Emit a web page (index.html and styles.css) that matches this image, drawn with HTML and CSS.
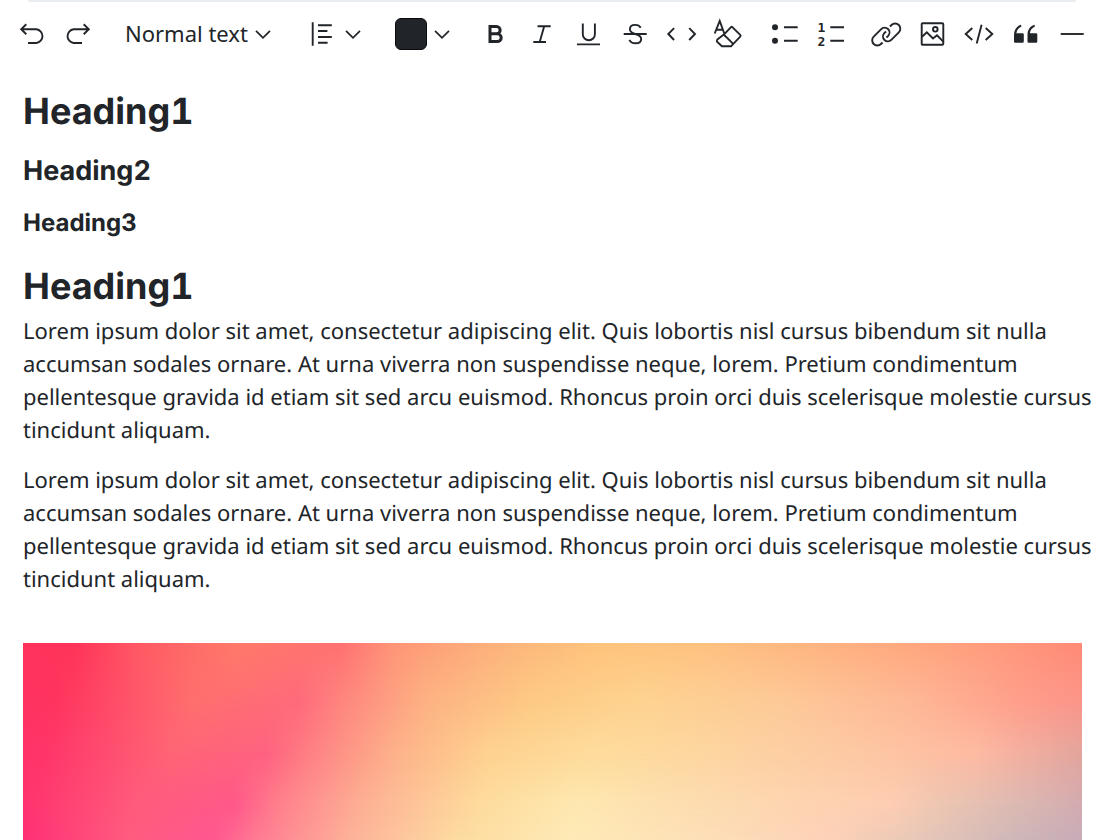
FILE: index.html
```html
<!DOCTYPE html>
<html lang="en">
<head>
<meta charset="utf-8">
<title>Text editor</title>
<link rel="stylesheet" href="styles.css">
</head>
<body>
<div class="editor">
  <div class="panel-edge"></div>
  <div class="toolbar" role="toolbar" aria-label="Formatting">
    <div class="group group-history">
      <button class="tool" type="button" aria-label="Undo"><svg class="icon" viewBox="0 0 24 24"><path d="M1.2 7.3H16.4a6.9 6.9 0 0 1 0 13.7H8M6.3 2.3L1.2 7.3l5.1 5"/></svg></button>
      <button class="tool" type="button" aria-label="Redo"><svg class="icon" viewBox="0 0 24 24"><path d="M22.8 7.3H7.6a6.9 6.9 0 0 0 0 13.7H16M17.7 2.3l5.1 5-5.1 5"/></svg></button>
    </div>
    <div class="group group-style">
      <select class="style-select" aria-label="Text style">
        <option>Normal text</option>
        <option>Heading1</option>
        <option>Heading2</option>
        <option>Heading3</option>
      </select>
      <svg class="chevron style-chevron" viewBox="0 0 16 24"><path d="M1 8.8l7 7 7-7"/></svg>
    </div>
    <div class="group group-align">
      <button class="tool menu align-menu" type="button" aria-label="Alignment" aria-haspopup="true">
        <svg class="icon" viewBox="0 0 24 24"><path d="M1.7.3v23.4M7 3.3h13.8M7 9h9.4M7 15h13.8M7 20.7h9.6"/></svg>
        <svg class="chevron" viewBox="0 0 16 24"><path d="M1 8.8l7 7 7-7"/></svg>
      </button>
    </div>
    <div class="group group-color">
      <button class="tool menu" type="button" aria-label="Text color" aria-haspopup="true">
        <span class="swatch"></span>
        <svg class="chevron" viewBox="0 0 16 24"><path d="M1 8.8l7 7 7-7"/></svg>
      </button>
    </div>
    <div class="group">
      <button class="tool" type="button" aria-label="Bold"><svg class="icon" viewBox="0 0 24 24"><path stroke-width="3" d="M7 4.5h6.5a3.6 3.6 0 0 1 0 7.3H7zM7 11.8h7.3a3.9 3.9 0 0 1 0 7.8H7z"/></svg></button>
      <button class="tool" type="button" aria-label="Italic"><svg class="icon" viewBox="0 0 24 24"><path d="M7.5 4.2h13.2M3.3 20H16M14.2 4.2L9.7 20"/></svg></button>
      <button class="tool" type="button" aria-label="Underline"><svg class="icon" viewBox="0 0 24 24"><path d="M5.8 1.5v10.700a6 6 0 0 0 12.100 0V1.500M0 22.400h23"/></svg></button>
      <button class="tool" type="button" aria-label="Strikethrough"><svg class="icon" viewBox="0 0 24 24"><path d="M-.3 12h23M16.700 5.800C15.700 3.900 13.700 2.900 11.200 2.900c-3 0-5.300 1.600-5.300 4.300 0 3 2.700 4 5.300 4.800 3.200.9 6 1.800 6 4.900 0 2.700-2.400 4.300-5.600 4.300-2.900 0-5.200-1.200-6.200-3.400"/></svg></button>
      <button class="tool" type="button" aria-label="Inline code"><svg class="icon" viewBox="0 0 24 24"><path d="M3.100 6.200L-2.700 12l5.800 6M18.200 6.200l5.800 5.800-5.800 6"/></svg></button>
      <button class="tool" type="button" aria-label="Clear formatting"><svg class="icon" viewBox="0 0 24 24"><path d="M-3.300 11.500L1.700-1.100l4.500 12.400M-1.600 7.700h6.400M5.800 12.600L12.800 5.300q.9-.9 1.800 0l7.600 7.600q.9.900 0 1.800L13 24.300H4L-1 19.600q-.5-1.400.4-2.200l6.400-4.800 9.600 9.500"/></svg></button>
    </div>
    <div class="group">
      <button class="tool" type="button" aria-label="Bulleted list"><svg class="icon" viewBox="0 0 24 24"><circle class="solid" cx="3" cy="5.3" r="3"/><circle class="solid" cx="3" cy="18.7" r="3"/><path d="M12 5.3h13.7M12 18.7h13.7"/></svg></button>
      <button class="tool" type="button" aria-label="Numbered list"><svg class="icon" viewBox="0 0 24 24"><text class="digit" x="-1.5" y="10">1</text><text class="digit" x="-1.5" y="23.7">2</text><path d="M11.3 5.3H25M11.3 18.7H25"/></svg></button>
    </div>
    <div class="group">
      <button class="tool" type="button" aria-label="Link"><svg class="icon" viewBox="0 0 24 24"><path d="M17 4.5l1.500-1.500a5 5 0 0 1 7.300 7.300l-7.500 7.500a4.800 4.800 0 0 1-7-6.600l1.700-1.700M9.500 20.500L8 22A5 5 0 0 1 .7 14.700l7.500-7.500a4.800 4.800 0 0 1 7 6.600l-1.700 1.700"/></svg></button>
      <button class="tool" type="button" aria-label="Image"><svg class="icon" viewBox="0 0 24 24"><rect x="1.7" y="1.2" width="21.600" height="21.600" rx="1"/><circle cx="15.300" cy="7.300" r="2.300"/><path d="M2 14.800l4.800-4.500 6.200 6.200 4-3.200 6.300 6.300"/></svg></button>
      <button class="tool" type="button" aria-label="Code block"><svg class="icon" viewBox="0 0 24 24"><path d="M5.300 6L-1.300 12l6.600 6M18.700 6l6.600 6-6.600 6M14.600 2.700L9.700 21.600"/></svg></button>
      <button class="tool" type="button" aria-label="Quote"><svg class="icon" viewBox="0 0 24 24"><path class="solid" d="M0 13C0 8 2.500 4.200 6.800 2.700l.7 1.700C4.500 5.800 2.700 8 2.400 11.200h6.200q1.200 0 1.200 1.200v7.100q0 1.200-1.200 1.200H1.200Q0 20.700 0 19.500zM13.500 13c0-5 2.500-8.800 6.800-10.300l.7 1.700c-3 1.400-4.800 3.600-5.100 6.800h6.200q1.200 0 1.200 1.200v7.100q0 1.200-1.200 1.200h-7.400q-1.200 0-1.200-1.200z"/></svg></button>
      <button class="tool" type="button" aria-label="Horizontal rule"><svg class="icon" viewBox="0 0 24 24"><path d="M-.3 12h23"/></svg></button>
    </div>
  </div>
  <main class="document">
    <h1>Heading1</h1>
    <h2>Heading2</h2>
    <h3>Heading3</h3>
    <h1>Heading1</h1>
    <p>Lorem ipsum dolor sit amet, consectetur adipiscing elit. Quis lobortis nisl cursus bibendum sit nulla accumsan sodales ornare. At urna viverra non suspendisse neque, lorem. Pretium condimentum pellentesque gravida id etiam sit sed arcu euismod. Rhoncus proin orci duis scelerisque molestie cursus tincidunt aliquam.</p>
    <p>Lorem ipsum dolor sit amet, consectetur adipiscing elit. Quis lobortis nisl cursus bibendum sit nulla accumsan sodales ornare. At urna viverra non suspendisse neque, lorem. Pretium condimentum pellentesque gravida id etiam sit sed arcu euismod. Rhoncus proin orci duis scelerisque molestie cursus tincidunt aliquam.</p>
    <div class="artwork" role="img" aria-label="Warm gradient">
      <div class="wash wash-1"></div>
      <div class="wash wash-2"></div>
      <div class="wash wash-3"></div>
      <div class="wash wash-4"></div>
      <div class="wash wash-5"></div>
    </div>
  </main>
</div>
</body>
</html>
```
FILE: styles.css
```css
* { box-sizing: border-box; }

body {
  margin: 0;
  background: #fff;
  color: #212529;
  font-family: "Noto Sans", sans-serif;
  font-size: 22px;
  text-rendering: geometricPrecision;
}

.editor {
  display: flex;
  flex-direction: column;
  height: 100vh;
  overflow: hidden;
}

.panel-edge {
  flex: none;
  height: 2px;
  margin: 0 28px;
  border-radius: 0 0 16px 16px;
  background: #e9edf1;
}

.toolbar {
  display: flex;
  flex-wrap: wrap;
  gap: 8px 30px;
  padding: 16px 12px 16px 20px;
}

.group {
  display: flex;
  align-items: center;
  gap: 23px;
  height: 32px;
}

.group-history { gap: 22px; padding-right: 5px; }
.group-style { position: relative; padding-right: 10px; }
.group-align { padding-right: 4px; }
.group-color { padding-right: 3px; }

.tool {
  display: flex;
  align-items: center;
  padding: 0;
  border: 0;
  background: none;
  color: inherit;
}

.menu { gap: 7px; }
.align-menu { gap: 10px; }

.icon, .chevron {
  display: block;
  width: 24px;
  height: 24px;
  overflow: visible;
  fill: none;
  stroke: #212529;
  stroke-width: 1.9;
}

.chevron { width: 16px; stroke-width: 1.7; }
.solid { fill: #212529; stroke: none; }

.digit {
  fill: #212529;
  stroke: none;
  font: bold 13px "DejaVu Sans Mono", monospace;
}

.style-select {
  appearance: none;
  padding: 0 23px 2px 0;
  border: 0;
  background: none;
  color: inherit;
  font: inherit;
  line-height: 30px;
}

.style-chevron {
  position: absolute;
  right: 10px;
  top: 4px;
  pointer-events: none;
}

.swatch {
  width: 32px;
  height: 32px;
  border: 1px solid #0b0c0e;
  border-radius: 6px;
  background: #212529;
}

.document {
  display: flex;
  flex: 1;
  flex-direction: column;
  padding: 21px 10px 0 23px;
}

h1, h2, h3, p { margin: 0; }

h1, h2, h3 {
  font-family: Inter, sans-serif;
  font-weight: 700;
  font-feature-settings: "tnum";
}

h1 { margin-bottom: 5px; font-size: 36px; line-height: 48px; }
h2 { margin-top: 13px; font-size: 27px; line-height: 36px; }
h3 { margin: 17px 0 22px; font-size: 24px; line-height: 34px; }

p { margin-bottom: 17px; line-height: 33px; }

.artwork {
  display: grid;
  flex: 1;
  min-height: 197px;
  margin: 30px 12px 0 0;
}

.wash { grid-area: 1 / 1; }

.wash-1 {
  background: linear-gradient(90deg, #ff335c, #ff345a 5%, #ff5a64 11%, #ff7a6a 20%, #ff7072 30%, #fe9577 35%, #fdb17b 44%, #fec47d 54%, #fec280 64%, #ffb080 78%, #ff9c7d 91%, #ff8a76);
}

.wash-2 {
  background: linear-gradient(90deg, #ff3360, #ff345e 3%, #ff4a68 8%, #ff6f6e 16%, #ff6a7b 26%, #fe857f 30%, #fdb283 38%, #fdca85 48%, #fed390 58%, #fdca98 71%, #feb896 84%, #ff9f8c 94%, #fc958a);
  mask-image: linear-gradient(transparent, #000 30%);
}

.wash-3 {
  background: linear-gradient(90deg, #ff3468, #ff356a 2%, #ff6576 14%, #ff6280 23%, #fe8084 27%, #fdb18a 35%, #fed28f 44%, #fedc9c 54%, #fdd6a0 64%, #fdc9a4 78%, #febaa2 90%, #f4b0a0 94%, #e2a59d);
  mask-image: linear-gradient(transparent 30%, #000 56%);
}

.wash-4 {
  background: linear-gradient(90deg, #ff336f, #ff5c7c 11%, #ff588a 20%, #ff7f8c 24%, #fdb094 32%, #fedb9d 43%, #fee8b0 52%, #fddcb0 64%, #fecdb2 82%, #efc7b2 86%, #dbb9b2 94%, #d3abb0);
  mask-image: linear-gradient(transparent 56%, #000 82%);
}

.wash-5 {
  background: linear-gradient(90deg, #ff3076, #ff5c80 10%, #ff5790 18%, #ff7b92 22%, #fdb29a 31%, #fddba0 41%, #feeab6 52%, #fddfb8 64%, #fdd1b8 76%, #e8c8b8 84%, #cdb6b8 94%, #c7abb8);
  mask-image: linear-gradient(transparent 82%, #000);
}
```
